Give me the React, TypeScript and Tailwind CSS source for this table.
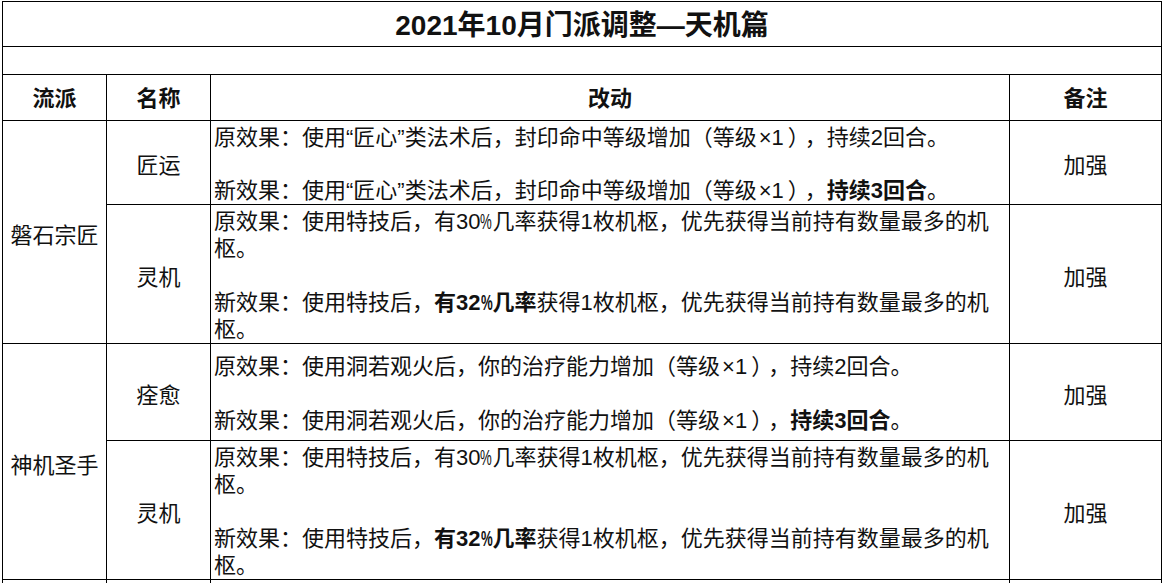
import React from 'react';

type Seg = { t: string; b?: boolean };
type Line = Seg[];

const font = { fontFamily: '"Liberation Sans", "Noto Sans CJK SC", sans-serif' };

const oldJiangyun: Line = [{ t: '原效果：使用“匠心”类法术后，封印命中等级增加（等级×1），持续2回合。' }];
const newJiangyun: Line = [
  { t: '新效果：使用“匠心”类法术后，封印命中等级增加（等级×1），' },
  { t: '持续3回合', b: true },
  { t: '。' },
];

const lingji: Line[] = [
  [{ t: '原效果：使用特技后，有30%几率获得1枚机枢，优先获得当前持有数量最多的机' }],
  [{ t: '枢。' }],
  [],
  [
    { t: '新效果：使用特技后，' },
    { t: '有32%几率', b: true },
    { t: '获得1枚机枢，优先获得当前持有数量最多的机' },
  ],
  [{ t: '枢。' }],
];

const quanyu: Line[] = [
  [{ t: '原效果：使用洞若观火后，你的治疗能力增加（等级×1），持续2回合。' }],
  [],
  [
    { t: '新效果：使用洞若观火后，你的治疗能力增加（等级×1），' },
    { t: '持续3回合', b: true },
    { t: '。' },
  ],
];

const sections = [
  {
    school: '磐石宗匠',
    rows: [
      { name: '匠运', lines: [oldJiangyun, [], newJiangyun], note: '加强' },
      { name: '灵机', lines: lingji, note: '加强' },
    ],
  },
  {
    school: '神机圣手',
    rows: [
      { name: '痊愈', lines: quanyu, note: '加强' },
      { name: '灵机', lines: lingji, note: '加强' },
    ],
  },
];

// the sheet's font spaces a few glyphs differently: half-width %, looser "×1），"
function Text({ t }: { t: string }) {
  const parts = t.split(/(%|×|），)/);
  return (
    <>
      {parts.map((p, i) => {
        if (p === '%') return <span key={i} className="inline-block w-[12px] scale-x-60 origin-left">%</span>;
        if (p === '×') return <span key={i} className="ml-[2px]">×</span>;
        if (p === '），')
          return (
            <React.Fragment key={i}>
              <span className="ml-[4px]">）</span>
              <span className="ml-[6px]">，</span>
            </React.Fragment>
          );
        return <React.Fragment key={i}>{p}</React.Fragment>;
      })}
    </>
  );
}

function Content({ lines }: { lines: Line[] }) {
  return (
    <div className="bg-white flex flex-col justify-center pl-[3px] pt-[3px] text-[22px] leading-[27px] text-[#111] whitespace-nowrap overflow-hidden">
      {lines.map((line, i) => (
        <div key={i} className="h-[27px]">
          {line.map((s, j) => (
            <span key={j} className={s.b ? 'font-bold' : ''}>
              <Text t={s.t} />
            </span>
          ))}
        </div>
      ))}
    </div>
  );
}

function Center({ children, bold = false }: { children?: React.ReactNode; bold?: boolean }) {
  return (
    <div
      className={`bg-white flex items-center justify-center text-[22px] leading-[27px] text-[#111] ${
        bold ? 'font-bold pt-[2px]' : 'pt-[6px]'
      }`}
    >
      {children}
    </div>
  );
}

export default function App() {
  return (
    <div lang="zh-CN" style={font} className="w-[1164px] h-[583px] overflow-hidden bg-white pl-[2px] pt-[1px]">
      <div className="grid w-fit grid-cols-[103px_103px_798px_151px] grid-rows-[44px_27px_45px_83px_138px_96px_138px_60px] gap-px bg-black p-px">
        <div className="col-span-4 bg-white flex items-center justify-center pt-[3px] text-[28px] font-bold text-[#111]">
          2021年10月门派调整—天机篇
        </div>
        <div className="col-span-4 bg-white" />

        <Center bold>流派</Center>
        <Center bold>名称</Center>
        <Center bold>改动</Center>
        <Center bold>备注</Center>

        {sections.map(sec => (
          <React.Fragment key={sec.school}>
            <div className="row-span-2 bg-white flex items-center justify-center pt-[7px] text-[22px] text-[#111]">
              {sec.school}
            </div>
            {sec.rows.map((r, i) => (
              <React.Fragment key={i}>
                <Center>{r.name}</Center>
                <Content lines={r.lines} />
                <Center>{r.note}</Center>
              </React.Fragment>
            ))}
          </React.Fragment>
        ))}

        <div className="bg-white" />
        <div className="bg-white" />
        <div className="bg-white" />
        <div className="bg-white" />
      </div>
    </div>
  );
}
